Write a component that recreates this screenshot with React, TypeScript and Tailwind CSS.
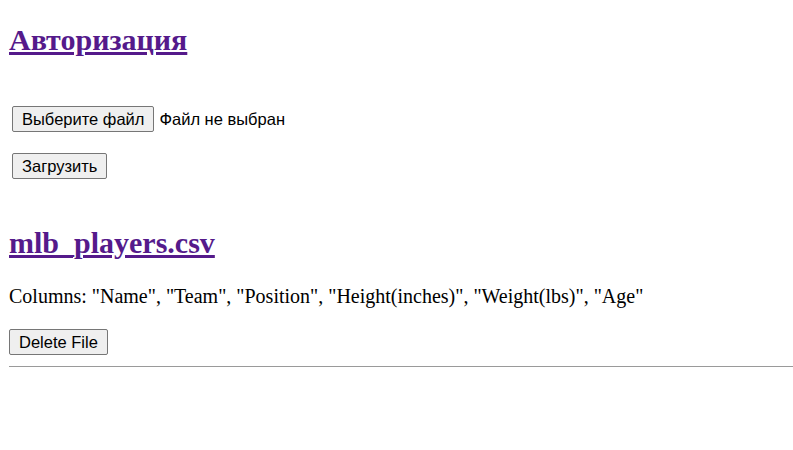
const buttonClass =
  "h-[26px] px-[9px] bg-[#efefef] border border-[#767676] rounded-[2px] text-[16.5px] leading-[18px] text-black font-['Liberation_Sans',Arial,sans-serif]";

const App = () => {
  return (
    <div className="min-h-screen bg-white pl-[9px] pt-[23px] font-['Liberation_Serif','Times_New_Roman',serif] text-black">
      <h1 className="text-[30px] leading-[34px] font-bold">
        <a href="#" className="text-[#551a8b] underline">Авторизация</a>
      </h1>

      {/* Upload form */}
      <form className="pl-[3px]" onSubmit={(e) => e.preventDefault()}>
        <div className="mt-[49px] flex items-center gap-[5px]">
          <button type="button" className={buttonClass}>Выберите файл</button>
          <span className="text-[16.5px] leading-[18px] font-['Liberation_Sans',Arial,sans-serif]">Файл не выбран</span>
        </div>
        <div className="mt-[21px]">
          <button type="submit" className={buttonClass}>Загрузить</button>
        </div>
      </form>

      <h1 className="mt-[47px] text-[30px] leading-[34px] font-bold">
        <a href="#" className="text-[#551a8b] underline">mlb_players.csv</a>
      </h1>
      <p className="mt-[25px] text-[20px] leading-[23px]">
        Columns: "Name", "Team", "Position", "Height(inches)", "Weight(lbs)", "Age"
      </p>
      <button type="button" className={`mt-[21px] ${buttonClass}`}>Delete File</button>
      <hr className="mt-[11px] border-0 border-t border-[#9a9a9a]" />
    </div>
  );
};

export default App;
